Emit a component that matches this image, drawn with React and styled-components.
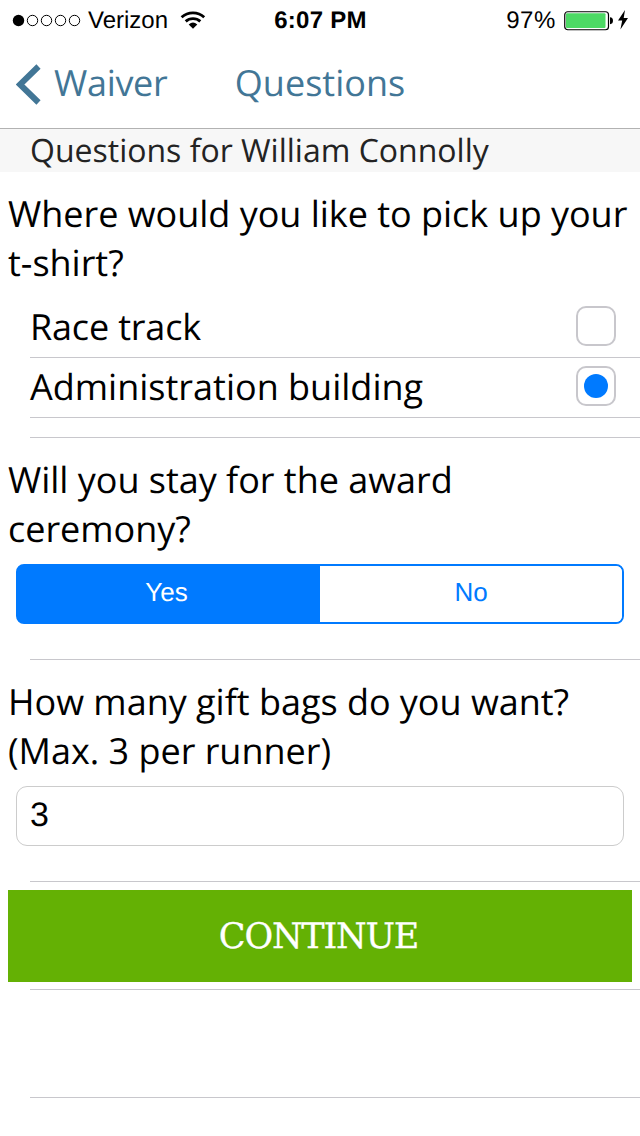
import React, { useState } from "react";
import styled, { createGlobalStyle } from "styled-components";

const GlobalStyle = createGlobalStyle`
  * { box-sizing: border-box; }
  body {
    margin: 0;
    background: #fff;
    color: #000;
    font-family: "Open Sans", sans-serif;
    text-rendering: geometricPrecision;
  }
  button, input { font: inherit; margin: 0; text-rendering: inherit; }
`;

const Screen = styled.main`
  width: 640px;
  height: 1136px;
  overflow: hidden;
  background: #fff;
`;

const StatusBar = styled.div`
  display: grid;
  grid-template-columns: 1fr auto 1fr;
  grid-template-rows: 40px;
  height: 40px;
  padding: 0 11px 0 12px;
  font: 24px/40px "Liberation Sans", Arial, sans-serif;
`;

const StatusGroup = styled.div`
  display: flex;
  justify-content: ${({ $end }) => ($end ? "flex-end" : "flex-start")};
`;

const StatusIcon = styled.svg`
  display: block;
  flex: none;
  margin-top: ${({ $top = 11 }) => $top}px;
  margin-left: ${({ $gap = 0 }) => $gap}px;
`;

const StatusText = styled.span`
  margin-left: ${({ $gap = 0 }) => $gap}px;
  line-height: 42px;
  letter-spacing: ${({ $track = 0 }) => $track}px;
`;

const Clock = styled.strong`
  font-weight: 700;
  line-height: 42px;
  letter-spacing: 0.25px;
`;

const NavBar = styled.header`
  display: grid;
  grid-template-columns: 1fr auto 1fr;
  height: 89px;
  padding: 18px 16px 0;
  border-bottom: 1px solid #b2b2b2;
  color: #427696;
`;

const BackButton = styled.button`
  display: flex;
  align-items: flex-start;
  height: 50px;
  padding: 0;
  border: 0;
  background: none;
  color: inherit;
  line-height: 49px;
  font-size: 36px;
  letter-spacing: -0.3px;
`;

const Chevron = styled.svg`
  margin: 6px 13px 0 0;
`;

const NavTitle = styled.h1`
  margin: 0;
  font-size: 36px;
  line-height: 49px;
  font-weight: 400;
`;

const SectionHeader = styled.h2`
  height: 43px;
  margin: 0;
  padding-left: 30px;
  background: #f7f7f7;
  color: #232323;
  font-size: 32px;
  line-height: 43px;
  font-weight: 400;
`;

const Block = styled.section`
  height: ${({ $height }) => $height}px;
  padding-top: ${({ $top }) => $top}px;
  background: linear-gradient(#c8c7cc, #c8c7cc) 30px 100% / 610px 1px no-repeat;
`;

const Prompt = styled.p`
  margin: 0;
  padding-left: 8px;
  font-size: 36px;
  line-height: 49px;
  letter-spacing: -0.02px;
  white-space: pre-line;
`;

const Options = styled.div`
  margin-top: 11px;
`;

const Option = styled.label`
  display: flex;
  align-items: center;
  justify-content: space-between;
  height: 60px;
  margin-left: 30px;
  padding: 0 24px 2px 0;
  border-bottom: 1px solid #c8c7cc;
  font-size: 36px;
  line-height: 49px;
  letter-spacing: ${({ $track }) => $track}px;
`;

const Radio = styled.input`
  appearance: none;
  flex: none;
  width: 40px;
  height: 40px;
  margin-top: -1px;
  border: 2px solid #c8c7cc;
  border-radius: 10px;
  background: #fff;
  display: grid;
  place-items: center;

  &:checked::before {
    content: "";
    width: 24px;
    height: 24px;
    border-radius: 50%;
    background: #007aff;
  }
`;

const Segments = styled.div`
  display: grid;
  grid-template-columns: 1fr 1fr;
  height: 60px;
  margin: 11px 16px 0;
  overflow: hidden;
  border: 2px solid #007aff;
  border-radius: 8px;
  background: linear-gradient(90deg, #007aff 50%, #fff 50%);
`;

const Segment = styled.button`
  padding: ${({ $active }) => ($active ? "0 5px 3px 0" : "0 0 3px")};
  border: 0;
  background: ${({ $active }) => ($active ? "#007aff" : "#fff")};
  color: ${({ $active }) => ($active ? "#fff" : "#007aff")};
  font-family: "Liberation Sans", Arial, sans-serif;
  font-size: 26px;
`;

const Quantity = styled.input`
  display: block;
  width: 608px;
  height: 60px;
  margin: 11px 16px 0;
  padding: 0 13px 2px;
  border: 1px solid #cccccc;
  border-radius: 11px;
  outline: 0;
  background: #fff;
  color: #000;
  font-family: "Liberation Sans", Arial, sans-serif;
  font-size: 34px;
`;

const ContinueButton = styled.button`
  display: block;
  width: 624px;
  height: 92px;
  margin: 0 8px;
  padding: 1px 3px 0 0;
  border: 0;
  background: #64b104;
  color: #fff;
  font-family: "DejaVu Serif", serif;
  font-size: 35px;
  letter-spacing: -1.2px;
  -webkit-text-stroke: 0.3px #fff;
`;

function SignalDots() {
  return (
    <StatusIcon $top={14} width="70" height="14" viewBox="0 0 70 14">
      <circle cx="6.5" cy="6.5" r="5.7" />
      {[20.5, 34.5, 48.5, 62.5].map((x) => (
        <circle key={x} cx={x} cy="6.5" r="5.2" fill="none" stroke="#000" />
      ))}
    </StatusIcon>
  );
}

function Wifi() {
  return (
    <StatusIcon $gap={12} width="26" height="20" viewBox="0 0 26 20">
      <g fill="none" stroke="#000" strokeWidth="2.8">
        <path d="M1.6 6.2C8 .4 18 .4 24.2 6.2" />
        <path d="M5.7 10.4C9.8 6.6 16.2 6.6 20.3 10.4" />
      </g>
      <path d="M8.7 13.4Q13 9.8 17.3 13.4L13 17.8Z" />
    </StatusIcon>
  );
}

function Battery() {
  return (
    <StatusIcon $gap={8} width="50" height="20" viewBox="0 0 50 20">
      <rect x="0.75" y="0.75" width="43.75" height="18" rx="3" fill="#fff" stroke="#000" strokeWidth="1.2" />
      <rect x="2" y="2.2" width="39.5" height="14.8" rx="1" fill="#4cd964" />
      <path d="M46 6.3Q49 6.7 49 9.7T46 13.2Z" />
    </StatusIcon>
  );
}

const pickupPlaces = [
  { name: "Race track", track: -0.18 },
  { name: "Administration building", track: 0 },
];

export default function App() {
  const [place, setPlace] = useState("Administration building");
  const [staying, setStaying] = useState("Yes");
  const [bags, setBags] = useState("3");

  return (
    <>
      <GlobalStyle />
      <Screen>
        <StatusBar>
          <StatusGroup>
            <SignalDots />
            <StatusText $gap={6}>Verizon</StatusText>
            <Wifi />
          </StatusGroup>
          <Clock>6:07 PM</Clock>
          <StatusGroup $end>
            <StatusText $track={0.6}>97%</StatusText>
            <Battery />
            <StatusIcon $gap={3} $top={10} width="12" height="20" viewBox="0 0 12 20">
              <path d="M8 0L1 10.5H5.2L3.4 19.5L11 8H6.7Z" />
            </StatusIcon>
          </StatusGroup>
        </StatusBar>
        <NavBar>
          <BackButton>
            <Chevron width="25" height="42" viewBox="0 0 25 42">
              <path d="M22.5 2.5L4 20.5L22.5 38.5" fill="none" stroke="currentColor" strokeWidth="6" />
            </Chevron>
            Waiver
          </BackButton>
          <NavTitle>Questions</NavTitle>
        </NavBar>
        <SectionHeader>Questions for William Connolly</SectionHeader>

        <Block $height={266} $top={17}>
          <Prompt>{"Where would you like to pick up your\nt-shirt?"}</Prompt>
          <Options>
            {pickupPlaces.map(({ name, track }) => (
              <Option key={name} $track={track}>
                {name}
                <Radio type="radio" name="pickup" checked={place === name} onChange={() => setPlace(name)} />
              </Option>
            ))}
          </Options>
        </Block>

        <Block $height={222} $top={17}>
          <Prompt>{"Will you stay for the award\nceremony?"}</Prompt>
          <Segments>
            {["Yes", "No"].map((answer) => (
              <Segment key={answer} $active={staying === answer} onClick={() => setStaying(answer)}>
                {answer}
              </Segment>
            ))}
          </Segments>
        </Block>

        <Block $height={222} $top={17}>
          <Prompt>{"How many gift bags do you want?\n(Max. 3 per runner)"}</Prompt>
          <Quantity value={bags} onChange={(e) => setBags(e.target.value)} />
        </Block>

        <Block $height={108} $top={8}>
          <ContinueButton>CONTINUE</ContinueButton>
        </Block>
        <Block $height={108} $top={0} />
      </Screen>
    </>
  );
}
